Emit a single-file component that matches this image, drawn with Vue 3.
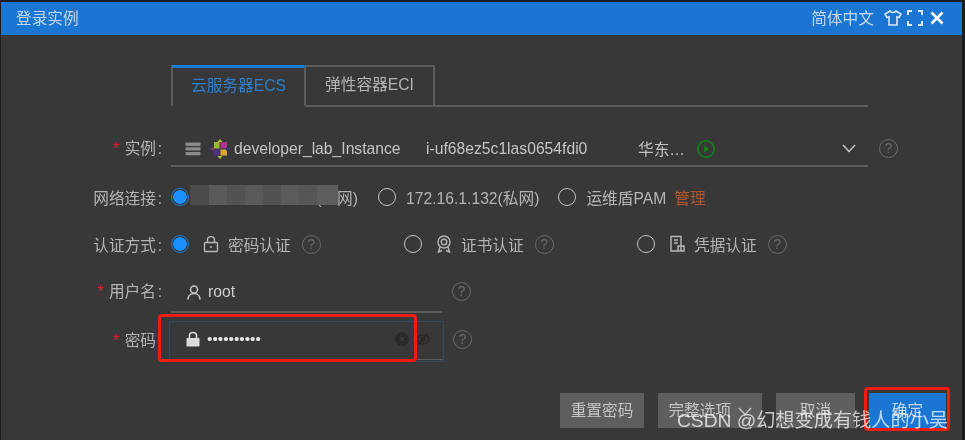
<script setup>
const authMethods = [
  { name: '密码认证', icon: 'lock', checked: true },
  { name: '证书认证', icon: 'cert', checked: false },
  { name: '凭据认证', icon: 'cred', checked: false }
]
</script>

<template>
  <div class="dialog">
    <div class="header">
      <span class="title">登录实例</span>
      <span class="lang">简体中文</span>
      <svg class="head-icon shirt" viewBox="0 0 18 16" width="18" height="16">
        <path d="M6 1 L1 4 L3 7.500 L5 6.800 V15 H13 V6.800 L15 7.500 L17 4 L12 1 C11 3 7 3 6 1 Z" />
      </svg>
      <svg class="head-icon full" viewBox="0 0 16 16" width="16" height="16">
        <path d="M1 5 V1 H5 M11 1 H15 V5 M15 11 V15 H11 M5 15 H1 V11" />
      </svg>
      <svg class="head-icon close" viewBox="0 0 14 14" width="14" height="14">
        <path d="M1.500 1.500 L12.500 12.500 M12.500 1.500 L1.500 12.500" />
      </svg>
    </div>

    <div class="tabs">
      <div class="tab active">云服务器ECS</div>
      <div class="tab">弹性容器ECI</div>
    </div>

    <div class="row row-instance">
      <label class="label"><i>*</i>实例<b>:</b></label>
      <div class="select">
        <svg class="server" viewBox="0 0 16 14" width="16" height="14">
          <rect x="0.500" y="0.500" width="15" height="3.400" rx="0.800" />
          <rect x="0.500" y="5.200" width="15" height="3.400" rx="0.800" />
          <rect x="0.500" y="9.900" width="15" height="3.400" rx="0.800" />
        </svg>
        <svg class="logo" viewBox="0 0 20 20" width="20" height="20">
          <rect x="4" y="3" width="5.500" height="6.500" fill="#9ab82e" />
          <rect x="10.500" y="3" width="6.500" height="6.500" fill="#b0308e" />
          <rect x="3.500" y="10.500" width="6" height="6" fill="#4a2f8c" />
          <rect x="10.500" y="10.500" width="6.500" height="6" fill="#e0a62c" />
          <path d="M10 0 L12.500 3 H7.500 Z M10 20 L12.500 17 H7.500 Z" fill="#b4cc30" />
          <path d="M0 10 L4 8 V12 Z" fill="#93308a" />
          <path d="M20 10 L16 8 V12 Z" fill="#3b3296" />
        </svg>
        <span class="inst-name">developer_lab_Instance</span>
        <span class="inst-id">i-uf68ez5c1las0654fdi0</span>
        <span class="inst-region">华东…</span>
        <svg class="play" viewBox="0 0 18 18" width="18" height="18">
          <circle cx="9" cy="9" r="8.200" />
          <path d="M7.200 5.800 L12 9 L7.200 12.200 Z" />
        </svg>
        <svg class="chevron" viewBox="0 0 14 9" width="14" height="9">
          <path d="M1 1 L7 7.500 L13 1" />
        </svg>
      </div>
      <span class="help">?</span>
    </div>

    <div class="row row-net">
      <label class="label">网络连接<b>:</b></label>
      <span class="radio checked"></span>
      <span class="public-ip">(公网)<span class="mosaic"></span></span>
      <span class="radio"></span>
      <span class="opt-text">172.16.1.132(私网)</span>
      <span class="radio"></span>
      <span class="opt-text">运维盾PAM</span>
      <a class="manage">管理</a>
    </div>

    <div class="row row-auth">
      <label class="label">认证方式<b>:</b></label>
      <div v-for="m in authMethods" :key="m.name" class="auth-item">
        <span class="radio" :class="{ checked: m.checked }"></span>
        <svg class="auth-icon" viewBox="0 0 16 18" width="16" height="18">
          <template v-if="m.icon === 'lock'">
            <rect x="1.500" y="7.500" width="13" height="9" rx="1" />
            <path d="M4.500 7.500 V5 C4.500 0.500 11.500 0.500 11.500 5 V7.500 M8 11 V13" />
          </template>
          <template v-else-if="m.icon === 'cert'">
            <circle cx="8" cy="7" r="6" />
            <circle cx="8" cy="7" r="2.800" />
            <path d="M4 12 L2.500 17 L6 15.500 M12 12 L13.500 17 L10 15.500" />
          </template>
          <template v-else>
            <path d="M2 1.500 H12 V16 H2 Z M5 5 H9 M5 8 H9 M9 11 H15 V16 H9 Z" />
          </template>
        </svg>
        <span class="auth-name">{{ m.name }}</span>
        <span class="help">?</span>
      </div>
    </div>

    <div class="row row-user">
      <label class="label"><i>*</i>用户名<b>:</b></label>
      <div class="input">
        <svg class="input-icon" viewBox="0 0 14 15" width="14" height="15">
          <circle cx="7" cy="4.500" r="3.500" />
          <path d="M1 14.500 C1 6.500 13 6.500 13 14.500" />
        </svg>
        <span class="value">root</span>
      </div>
      <span class="help">?</span>
    </div>

    <div class="row row-pass">
      <label class="label"><i>*</i>密码</label>
      <div class="pass-box">
        <div class="pass-inner">
          <svg class="pass-lock" viewBox="0 0 14 16" width="14" height="16">
            <path d="M3.500 7 V4.500 C3.500 0.500 10.500 0.500 10.500 4.500 V7" class="shackle" />
            <rect x="0.500" y="7" width="13" height="8.500" rx="0.800" />
          </svg>
          <span class="dots">••••••••••</span>
          <span class="clear">×</span>
          <svg class="eye" viewBox="0 0 14 12" width="14" height="12">
            <ellipse cx="7" cy="6.500" rx="5.800" ry="4.500" />
            <circle cx="7" cy="6.500" r="2" />
            <path d="M11.500 0.500 L2.500 11.500" />
          </svg>
        </div>
      </div>
      <span class="help">?</span>
      <span class="mark mark-pass"></span>
    </div>

    <div class="footer">
      <button class="btn btn-reset">重置密码</button>
      <button class="btn btn-full">
        完整选项
        <svg viewBox="0 0 14 9" width="14" height="9"><path d="M1 1 L7 7.500 L13 1" /></svg>
      </button>
      <button class="btn btn-cancel">取消</button>
      <button class="btn primary">确定<span class="mark mark-ok"></span></button>
    </div>

    <div class="watermark">CSDN @幻想变成有钱人的小吴</div>
  </div>
</template>

<style>
html, body {
  margin: 0;
  background: #1c1c1c;
}
</style>

<style scoped>
.dialog {
  position: relative;
  box-sizing: border-box;
  display: flex;
  flex-direction: column;
  width: 961px;
  height: 438px;
  margin: 2px 0 0 1px;
  background: #383838;
  color: #b4b4b4;
  font-family: "Liberation Sans", "Noto Sans CJK SC", sans-serif;
  font-size: 15.7px;
  filter: blur(0.55px);
}

.header {
  display: flex;
  align-items: center;
  flex: 0 0 33px;
  box-sizing: border-box;
  padding: 0 18px 2px 15px;
  background: #1a76d2;
  color: #c3d8ee;
}
.title { flex: 1; }
.lang { margin-right: 10px; }
.head-icon { fill: none; stroke: #dbe8f5; stroke-width: 1.6; }
.full { margin-left: 5px; stroke-width: 2; }
.close { margin-left: 7px; stroke: #fff; stroke-width: 2.6; }

.tabs {
  display: flex;
  margin: 30px 94px 0 170px;
  border-bottom: 2px solid #5c5c5c;
  height: 40px;
}
.tab {
  box-sizing: border-box;
  width: 129px;
  height: 42px;
  line-height: 36px;
  text-align: center;
  border: 2px solid #5c5c5c;
  border-left-width: 0;
}
.tab.active {
  width: 135px;
  color: #2b7fd0;
  border-top: 3px solid #1a7ad8;
  border-left-width: 2px;
  border-right-width: 2px;
  border-bottom-color: #383838;
}

.row {
  position: relative;
  display: flex;
  align-items: center;
}
.label {
  flex: 0 0 170px;
  box-sizing: border-box;
  padding-right: 15px;
  text-align: right;
  white-space: nowrap;
}
.label i {
  margin-right: 5px;
  color: #e0202a;
  font-style: normal;
  font-size: 17px;
}
.label b {
  display: inline-block;
  width: 8px;
  margin-right: -8px;
  font-weight: normal;
  text-align: center;
}

.row-instance { margin-top: 25px; height: 35px; }
.row-instance .label { padding-bottom: 4px; }
.select {
  display: flex;
  align-items: center;
  box-sizing: border-box;
  width: 697px;
  height: 35px;
  padding-left: 14px;
  border-bottom: 2px solid #5c5c5c;
  color: #c4c4c4;
}
.server { fill: #8a8a8a; stroke: none; }
.logo { margin-left: 9px; }
.inst-name { margin-left: 4px; width: 192px; }
.inst-id { width: 212px; }
.inst-region { width: 59px; }
.play { fill: none; stroke: #0f8a12; stroke-width: 1.4; }
.play path { fill: #0f8a12; stroke: none; }
.chevron { margin-left: 127px; fill: none; stroke: #c8c8c8; stroke-width: 1.5; }
.help {
  box-sizing: border-box;
  display: inline-block;
  width: 19px;
  height: 19px;
  margin-left: 11px;
  border: 1.5px solid #6a6a6a;
  border-radius: 50%;
  color: #6a6a6a;
  font-size: 14px;
  line-height: 16px;
  text-align: center;
  flex: none;
}
.row-instance > .help { margin-bottom: 2px; }

.radio {
  box-sizing: border-box;
  flex: none;
  width: 18px;
  height: 18px;
  margin-right: 10px;
  border: 1.5px solid #c4c4c4;
  border-radius: 50%;
}
.radio.checked {
  border: 1.5px solid #1b7fd6;
  background: radial-gradient(circle, #1c90ff 0 6.500px, #383838 7px);
}

.row-net { margin-top: 14px; height: 32px; }
.public-ip {
  position: relative;
  box-sizing: border-box;
  width: 169px;
  margin: 0 20px 0 -10px;
  text-align: right;
}
.mosaic {
  position: absolute;
  left: 1px;
  top: -1px;
  width: 148px;
  height: 20px;
  background: linear-gradient(90deg, #4a4a4a 0 19px, #5b5a58 19px 37px, #505254 37px 55px, #5a5957 55px 73px, #525252 73px 91px, #5c5b5a 91px 109px, #565656 109px 127px, #5e5d5c 127px);
}
.opt-text { margin-right: 19px; white-space: nowrap; }
.manage { margin-left: -11px; color: #b5562a; }

.row-auth { margin-top: 15px; height: 32px; }
.auth-item {
  display: flex;
  align-items: center;
  flex: 0 0 233px;
}
.auth-icon {
  margin: 0 9px 0 4px;
  fill: none;
  stroke: #b8b8b8;
  stroke-width: 1.4;
}
.auth-name { color: #b4b4b4; }

.row-user { margin-top: 15px; height: 32px; }
.row-user .label { padding-bottom: 2px; }
.input {
  display: flex;
  align-items: center;
  box-sizing: border-box;
  width: 271px;
  height: 37px;
  margin-top: 6px;
  padding: 0 0 2px 16px;
  border-bottom: 2px solid #5c5c5c;
}
.input-icon { fill: none; stroke: #c8c8c8; stroke-width: 1.5; }
.value { margin-left: 7px; color: #d0d0d0; }
.row-user .help { margin: 0 0 0 10px; }

.row-pass { margin-top: 14px; height: 41px; }
.row-pass .label { padding-bottom: 4px; }
.pass-box {
  box-sizing: border-box;
  width: 275px;
  height: 41px;
  margin-left: -2px;
  border: 1.5px solid #2b4a66;
}
.pass-inner {
  display: flex;
  align-items: center;
  box-sizing: border-box;
  height: 38px;
  padding: 0 13px 3px 16px;
  border-bottom: 1px solid #5c5c5c;
}
.pass-lock { fill: #dcdcdc; }
.pass-lock .shackle { fill: none; stroke: #dcdcdc; stroke-width: 1.6; }
.dots { margin-left: 7px; flex: 1; color: #e4e4e4; font-size: 15.400px; }
.clear {
  width: 14px;
  height: 14px;
  margin-right: 7px;
  border-radius: 50%;
  background: #2a2a2a;
  color: #4a4a4a;
  font-size: 11px;
  line-height: 14px;
  text-align: center;
}
.eye { fill: none; stroke: #262626; stroke-width: 1.2; }
.row-pass > .help { margin: 0 0 4px 9px; }

.mark {
  position: absolute;
  box-sizing: border-box;
  border: 3px solid #f01c10;
  border-radius: 4px;
  pointer-events: none;
}
.mark-pass { left: 157px; top: -7px; width: 259px; height: 48px; }
.mark-ok { left: -5px; top: -6px; width: 86px; height: 44px; }

.footer {
  display: flex;
  margin-top: auto;
  padding: 0 16px 12px 0;
  justify-content: flex-end;
  gap: 14px;
}
.btn {
  height: 35px;
  padding: 0 0 3px;
  border: none;
  background: #5e5e5e;
  color: #c6c6c6;
  font: inherit;
}
.btn-reset { width: 84px; }
.btn-full { width: 104px; }
.btn-full svg { fill: none; stroke: #c6c6c6; stroke-width: 1.4; margin-left: 2px; }
.btn-cancel { width: 79px; }
.primary {
  position: relative;
  width: 77px;
  background: #1a76d2;
  color: #c3d8ee;
}

.watermark {
  position: absolute;
  left: 676px;
  top: 403px;
  color: rgba(255, 255, 255, 0.72);
  font-size: 19.200px;
  white-space: nowrap;
}
</style>
